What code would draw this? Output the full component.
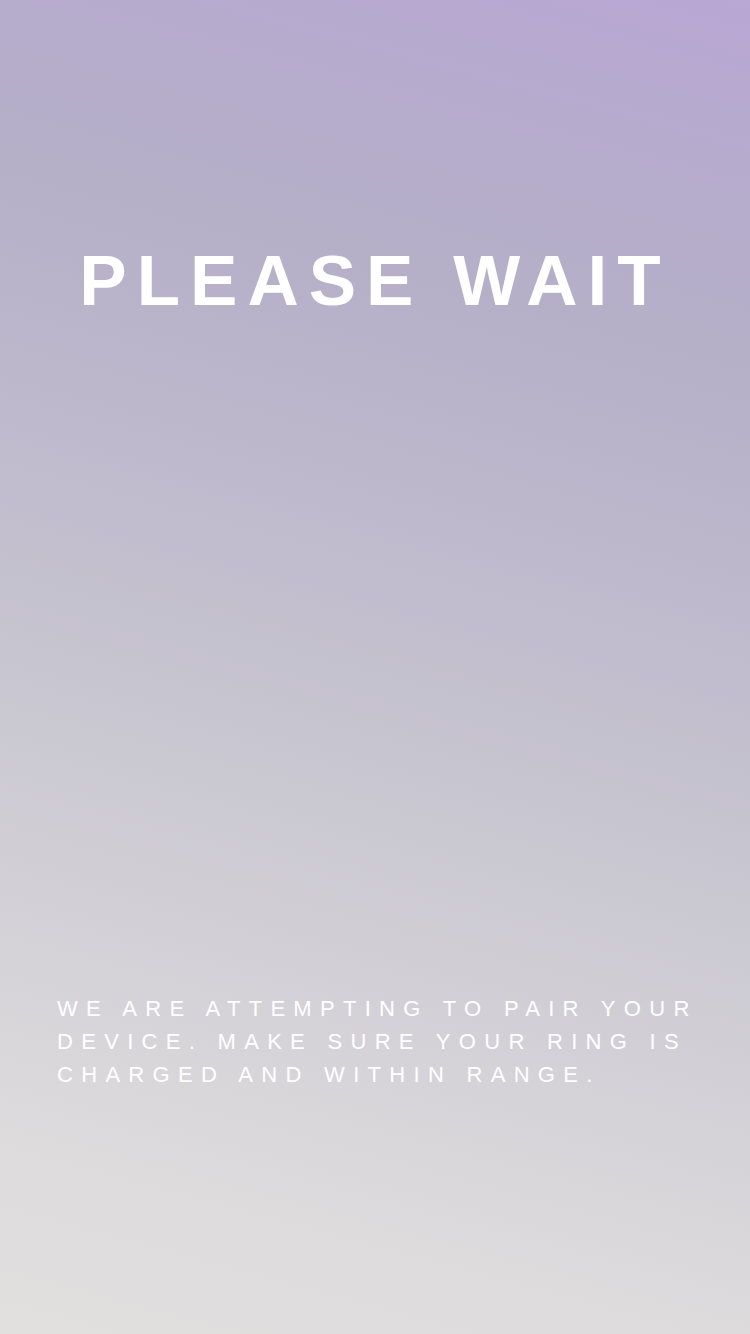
export default function App() {
  return (
    <div className="h-[1334px] w-full overflow-hidden bg-[linear-gradient(195deg,#b9a7d4_0%,#b6abcd_11%,#b5b0c8_24%,#bfb9cd_40%,#c6c4cf_54%,#dedbdd_87%,#e2dfdf_100%)] font-['Liberation_Sans',Arial,sans-serif] text-white">
      <h1 className="pt-[245px] text-center text-[71px] font-bold leading-none tracking-[10px]">
        PLEASE WAIT
      </h1>

      <p className="mt-[676px] pl-[57px] text-[22px] leading-[33px] tracking-[8.3px]">
        <span className="block whitespace-nowrap">WE ARE ATTEMPTING TO PAIR YOUR</span>
        <span className="block whitespace-nowrap">DEVICE. MAKE SURE YOUR RING IS</span>
        <span className="block whitespace-nowrap">CHARGED AND WITHIN RANGE.</span>
      </p>
    </div>
  );
}
